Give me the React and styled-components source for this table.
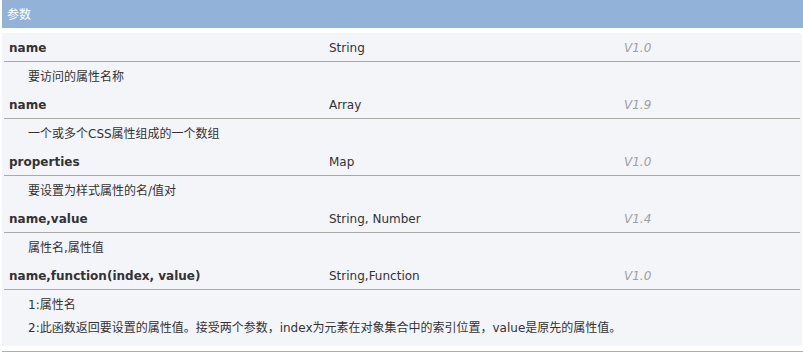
import React from "react";
import styled, { createGlobalStyle } from "styled-components";

const params = [
	{ name: "name", type: "String", ver: "V1.0", desc: ["要访问的属性名称"] },
	{ name: "name", type: "Array", ver: "V1.9", desc: ["一个或多个CSS属性组成的一个数组"] },
	{ name: "properties", type: "Map", ver: "V1.0", desc: ["要设置为样式属性的名/值对"] },
	{ name: "name,value", type: "String, Number", ver: "V1.4", desc: ["属性名,属性值"] },
	{
		name: "name,function(index, value)",
		type: "String,Function",
		ver: "V1.0",
		desc: [
			"1:属性名",
			"2:此函数返回要设置的属性值。接受两个参数，index为元素在对象集合中的索引位置，value是原先的属性值。",
		],
	},
];

const App = () => {
	return (
		<>
			<GlobalStyle />
			<Wrapper>
				<Header>参数</Header>
				<Table>
					{params.map((p, i) => (
						<Group key={i}>
							<NameRow>
								<Name>{p.name}</Name>
								<Type>{p.type}</Type>
								<Version>{p.ver}</Version>
							</NameRow>
							<Desc multi={p.desc.length > 1}>
								{p.desc.map((d, j) => (
									<DescLine key={j}>{d}</DescLine>
								))}
							</Desc>
						</Group>
					))}
				</Table>
				<Header />
			</Wrapper>
		</>
	);
};

const GlobalStyle = createGlobalStyle`
	* {
		box-sizing: border-box;
	}
	body {
		margin: 0;
		background: #fff;
		font-family: "DejaVu Sans", "Noto Sans CJK SC", sans-serif;
		font-size: 12px;
		color: #333;
	}
`;

const Wrapper = styled.div`
	padding-left: 2px;
	width: 803px;
	display: flex;
	flex-direction: column;
	gap: 5px;
`;

const Header = styled.div`
	height: 28px;
	line-height: 28px;
	background: #93b2d8;
	color: #fff;
	padding-left: 5px;
	font-family: "Noto Sans CJK SC", sans-serif;
	font-size: 12px;
	flex-shrink: 0;
`;

const Table = styled.div`
	background: #f4f5f9;
	padding: 0 2px 0 2px;
	margin-right: 1px;
`;

const Group = styled.div``;

const NameRow = styled.div`
	display: grid;
	grid-template-columns: 320px 295px 1fr;
	height: 29px;
	align-items: center;
	padding: 2px 0 0 5px;
	border-bottom: 1px solid #aaaaaa;
`;

const Name = styled.div`
	font-weight: bold;
`;

const Type = styled.div``;

const Version = styled.div`
	font-style: italic;
	color: #a0a0a0;
`;

const Desc = styled.div`
	padding: ${(p) => (p.multi ? "4px 0 6px 24px" : "2px 0 0 24px")};
	${(p) => (p.multi ? "" : "height: 28px; display: flex; align-items: center;")}
`;

const DescLine = styled.div`
	line-height: 23px;
`;

export default App;
